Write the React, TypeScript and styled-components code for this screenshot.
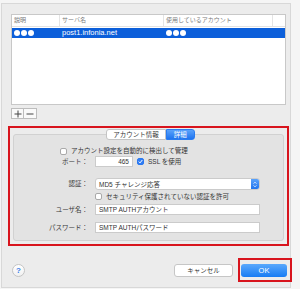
import React from 'react';
import styled, { createGlobalStyle } from 'styled-components';

const GlobalStyle = createGlobalStyle`
  html, body {
    margin: 0;
    padding: 0;
    background: #f5f5f5;
  }
  body {
    font-family: 'Liberation Sans', 'Noto Sans CJK JP', sans-serif;
    color: #333;
  }
  * {
    box-sizing: border-box;
  }
`;

const Window = styled.div`
  margin: 3px 0 0 1px;
  width: 290px;
  height: 285px;
  padding: 10px 4px 0 6px;
  background: #ececec;
  border: 1px solid #d8d8d8;
  display: flex;
  flex-direction: column;
`;

const columns = '48px 104px 109px 1fr';

const AccountList = styled.div`
  margin-left: 3px;
  width: 275px;
  height: 91px;
  background: #fff;
  border: 1px solid #c8c8c8;
`;

const ListHeader = styled.div`
  display: grid;
  grid-template-columns: ${columns};
  height: 12px;
  border-bottom: 1px solid #e2e2e2;
`;

const HeaderCell = styled.div`
  padding-left: 2px;
  font-size: 6px;
  line-height: 11px;
  color: #7a7a7a;
  border-right: 1px solid #e4e4e4;
  white-space: nowrap;
  overflow: hidden;

  &:last-child {
    border-right: none;
  }
`;

const SelectedRow = styled.div`
  display: grid;
  grid-template-columns: ${columns};
  align-items: center;
  height: 10px;
  margin-top: 1px;
  background: #0c5fda;
`;

const DotGroup = styled.div`
  display: flex;
  gap: 1px;
  padding-left: 2px;
`;

const Dot = styled.span`
  width: 6px;
  height: 6px;
  border-radius: 50%;
  background: #fff;
`;

const ServerName = styled.div`
  padding-left: 2px;
  font-size: 7.5px;
  line-height: 10px;
  color: #fff;
`;

const BarButtons = styled.div`
  display: flex;
  margin: 3px 0 0 3px;
`;

const SmallButton = styled.div`
  width: 13px;
  height: 11px;
  background: #fafafa;
  border: 1px solid #bdbdbd;
  display: flex;
  align-items: center;
  justify-content: center;

  & + & {
    border-left: none;
  }
`;

const RedBox = styled.div`
  margin-top: 7px;
  width: 281px;
  height: 120px;
  padding: 1px 3px 0 3px;
  border: 2px solid #d8141d;
  display: flex;
  flex-direction: column;
  align-items: center;
`;

const Segmented = styled.div`
  position: relative;
  z-index: 1;
  display: flex;
  height: 11px;
  margin-left: 4px;
`;

const Segment = styled.div<{ $active?: boolean }>`
  padding: 0 ${(p) => (p.$active ? 7 : 6)}px;
  font-size: 6.5px;
  line-height: 9px;
  border: 1px solid ${(p) => (p.$active ? '#2a7cf0' : '#c4c4c4')};
  background: ${(p) => (p.$active ? 'linear-gradient(#5aa2fb, #1f74ef)' : '#fff')};
  color: ${(p) => (p.$active ? '#fff' : '#333')};
  border-radius: ${(p) => (p.$active ? '0 3px 3px 0' : '3px 0 0 3px')};
`;

const Panel = styled.div`
  align-self: stretch;
  margin-top: -6px;
  height: 107px;
  padding-top: 11px;
  background: #e3e3e3;
  border: 1px solid #d1d1d1;
  border-radius: 3px;
  display: flex;
  flex-direction: column;
`;

const AutoRow = styled.div`
  display: flex;
  align-items: center;
  gap: 4px;
  height: 10px;
  padding-left: 46px;
`;

const FormRow = styled.div<{ $top: number; $height: number }>`
  display: grid;
  grid-template-columns: 74px 165px;
  column-gap: 7px;
  align-items: center;
  height: ${(p) => p.$height}px;
  margin-top: ${(p) => p.$top}px;
`;

const Label = styled.div`
  text-align: right;
  font-size: 6.5px;
  line-height: 10px;
  color: #3a3a3a;
  white-space: nowrap;
`;

const Text = styled.span`
  font-size: 6.5px;
  line-height: 10px;
  color: #333;
  white-space: nowrap;
`;

const Box = styled.span<{ $checked?: boolean }>`
  width: 7px;
  height: 7px;
  flex: none;
  border-radius: 2px;
  border: 1px solid ${(p) => (p.$checked ? '#2b78ee' : '#a9a9a9')};
  background: ${(p) => (p.$checked ? '#2f7df5' : '#fff')};
  display: flex;
  align-items: center;
  justify-content: center;
`;

const Inline = styled.div`
  display: flex;
  align-items: center;
  gap: 4px;
`;

const Field = styled.div<{ $width?: number; $align?: string }>`
  width: ${(p) => (p.$width ? `${p.$width}px` : '100%')};
  height: 100%;
  padding: 0 3px;
  background: #fff;
  border: 1px solid #cbcbcb;
  font-size: 6.5px;
  line-height: 9px;
  color: #333;
  display: flex;
  align-items: center;
  justify-content: ${(p) => p.$align || 'flex-start'};
  white-space: nowrap;
`;

const SelectBox = styled.div`
  height: 100%;
  padding-left: 3px;
  background: #fff;
  border: 1px solid #cbcbcb;
  border-radius: 3px;
  display: flex;
  align-items: center;
  justify-content: space-between;
  font-size: 6.5px;
  color: #333;
`;

const Stepper = styled.div`
  width: 8px;
  height: 100%;
  border-radius: 0 2px 2px 0;
  background: linear-gradient(#5aa2fb, #1f74ef);
  display: flex;
  align-items: center;
  justify-content: center;
`;

const BottomBar = styled.div`
  display: flex;
  align-items: center;
  height: 24px;
  margin: 12px -6px 0 0;
`;

const HelpButton = styled.div`
  width: 13px;
  height: 13px;
  margin-left: 4px;
  border-radius: 50%;
  background: linear-gradient(#ffffff, #f1f1f1);
  border: 1px solid #c4c4c4;
  color: #3a7fe6;
  font-size: 8px;
  font-weight: bold;
  display: flex;
  align-items: center;
  justify-content: center;
`;

const Spacer = styled.div`
  flex: 1;
`;

const CancelButton = styled.div`
  width: 59px;
  height: 13px;
  margin-right: 5px;
  background: #fff;
  border: 1px solid #c6c6c6;
  border-radius: 3px;
  font-size: 6.5px;
  color: #333;
  display: flex;
  align-items: center;
  justify-content: center;
`;

const RedFrame = styled.div`
  padding: 4px 3px 3px 1px;
  border: 2px solid #d8141d;
`;

const OkButton = styled.div`
  width: 46px;
  height: 13px;
  border-radius: 3px;
  background: linear-gradient(#5aa8fc, #177cf4);
  color: #fff;
  font-size: 7.5px;
  display: flex;
  align-items: center;
  justify-content: center;
`;

const Check = () => (
  <svg width="5" height="5" viewBox="0 0 10 10">
    <path d="M1.5 5.2 L4 7.8 L8.6 2" fill="none" stroke="#fff" strokeWidth="2" />
  </svg>
);

const Dots = () => (
  <DotGroup>
    <Dot />
    <Dot />
    <Dot />
  </DotGroup>
);

export default function App() {
  return (
    <>
      <GlobalStyle />
      <Window>
        <AccountList>
          <ListHeader>
            <HeaderCell>説明</HeaderCell>
            <HeaderCell>サーバ名</HeaderCell>
            <HeaderCell>使用しているアカウント</HeaderCell>
            <HeaderCell />
          </ListHeader>
          <SelectedRow>
            <Dots />
            <ServerName>post1.infonia.net</ServerName>
            <Dots />
            <div />
          </SelectedRow>
        </AccountList>

        <BarButtons>
          <SmallButton>
            <svg width="8" height="8" viewBox="0 0 8 8">
              <path d="M4 0.5 V7.5 M0.5 4 H7.5" stroke="#444" strokeWidth="1" />
            </svg>
          </SmallButton>
          <SmallButton>
            <svg width="8" height="8" viewBox="0 0 8 8">
              <path d="M0.5 4 H7.5" stroke="#444" strokeWidth="1" />
            </svg>
          </SmallButton>
        </BarButtons>

        <RedBox>
          <Segmented>
            <Segment>アカウント情報</Segment>
            <Segment $active>詳細</Segment>
          </Segmented>
          <Panel>
            <AutoRow>
              <Box />
              <Text>アカウント設定を自動的に検出して管理</Text>
            </AutoRow>

            <FormRow $top={0} $height={10}>
              <Label>ポート：</Label>
              <Inline>
                <Field $width={38} $align="flex-end">465</Field>
                <Box $checked>
                  <Check />
                </Box>
                <Text>SSL を使用</Text>
              </Inline>
            </FormRow>

            <FormRow $top={12} $height={10}>
              <Label>認証：</Label>
              <SelectBox>
                <span>MD5 チャレンジ応答</span>
                <Stepper>
                  <svg width="4" height="7" viewBox="0 0 4 7">
                    <path d="M0.6 2.6 L2 1.2 L3.4 2.6 M0.6 4.4 L2 5.8 L3.4 4.4" fill="none" stroke="#fff" strokeWidth="0.8" />
                  </svg>
                </Stepper>
              </SelectBox>
            </FormRow>

            <FormRow $top={3} $height={11}>
              <div />
              <Inline>
                <Box />
                <Text>セキュリティ保護されていない認証を許可</Text>
              </Inline>
            </FormRow>

            <FormRow $top={2} $height={11}>
              <Label>ユーザ名：</Label>
              <Field>SMTP AUTHアカウント</Field>
            </FormRow>

            <FormRow $top={7} $height={11}>
              <Label>パスワード：</Label>
              <Field>SMTP AUTHパスワード</Field>
            </FormRow>
          </Panel>
        </RedBox>

        <BottomBar>
          <HelpButton>?</HelpButton>
          <Spacer />
          <CancelButton>キャンセル</CancelButton>
          <RedFrame>
            <OkButton>OK</OkButton>
          </RedFrame>
        </BottomBar>
      </Window>
    </>
  );
}
